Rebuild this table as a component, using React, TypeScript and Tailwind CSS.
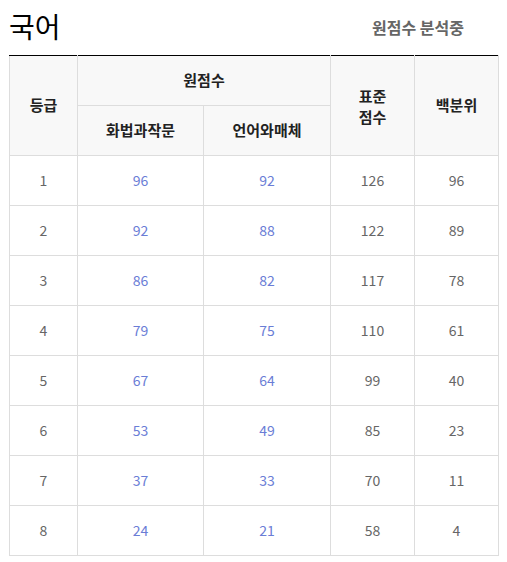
const rows = [
  [1, 96, 92, 126, 96],
  [2, 92, 88, 122, 89],
  [3, 86, 82, 117, 78],
  [4, 79, 75, 110, 61],
  [5, 67, 64, 99, 40],
  [6, 53, 49, 85, 23],
  [7, 37, 33, 70, 11],
  [8, 24, 21, 58, 4],
];

const font = { fontFamily: '"Noto Sans CJK KR", "Noto Sans", sans-serif' };

export default function App() {
  return (
    <div className="bg-white w-[507px] h-[562px] px-[9px]" style={font}>
      {/* Header */}
      <div className="flex items-end justify-between h-[55px] pb-[15px]">
        <h2 className="text-[28px] leading-none text-black">국어</h2>
        <span className="text-[16px] font-bold text-[#666] mr-[34px] mb-[1px]">원점수 분석중</span>
      </div>

      <table className="w-[489px] border-collapse table-fixed text-[14px]">
        <colgroup>
          <col className="w-[68px]" />
          <col className="w-[126px]" />
          <col className="w-[127px]" />
          <col className="w-[84px]" />
          <col className="w-[84px]" />
        </colgroup>
        <thead className="text-[15px]">
          <tr className="h-[50px] border-t border-t-black">
            <th rowSpan={2} className="bg-[#f8f8f8] border border-[#ddd] border-t-black font-bold text-[#222]">등급</th>
            <th colSpan={2} className="bg-[#f8f8f8] border border-[#ddd] border-t-black font-bold text-[#222]">원점수</th>
            <th rowSpan={2} className="bg-[#f8f8f8] border border-[#ddd] border-t-black font-bold text-[#222] leading-[21px]">
              표준
              <br />
              점수
            </th>
            <th rowSpan={2} className="bg-[#f8f8f8] border border-[#ddd] border-t-black font-bold text-[#222]">백분위</th>
          </tr>
          <tr className="h-[50px]">
            <th className="bg-[#f8f8f8] border border-[#ddd] font-bold text-[#222]">화법과작문</th>
            <th className="bg-[#f8f8f8] border border-[#ddd] font-bold text-[#222]">언어와매체</th>
          </tr>
        </thead>
        <tbody>
          {rows.map((r) => (
            <tr key={r[0]} className="h-[50px] text-center">
              <td className="border border-[#ddd] text-[#666]">{r[0]}</td>
              <td className="border border-[#ddd] text-[#6a7dd6]">{r[1]}</td>
              <td className="border border-[#ddd] text-[#6a7dd6]">{r[2]}</td>
              <td className="border border-[#ddd] text-[#666]">{r[3]}</td>
              <td className="border border-[#ddd] text-[#666]">{r[4]}</td>
            </tr>
          ))}
        </tbody>
      </table>
    </div>
  );
}
